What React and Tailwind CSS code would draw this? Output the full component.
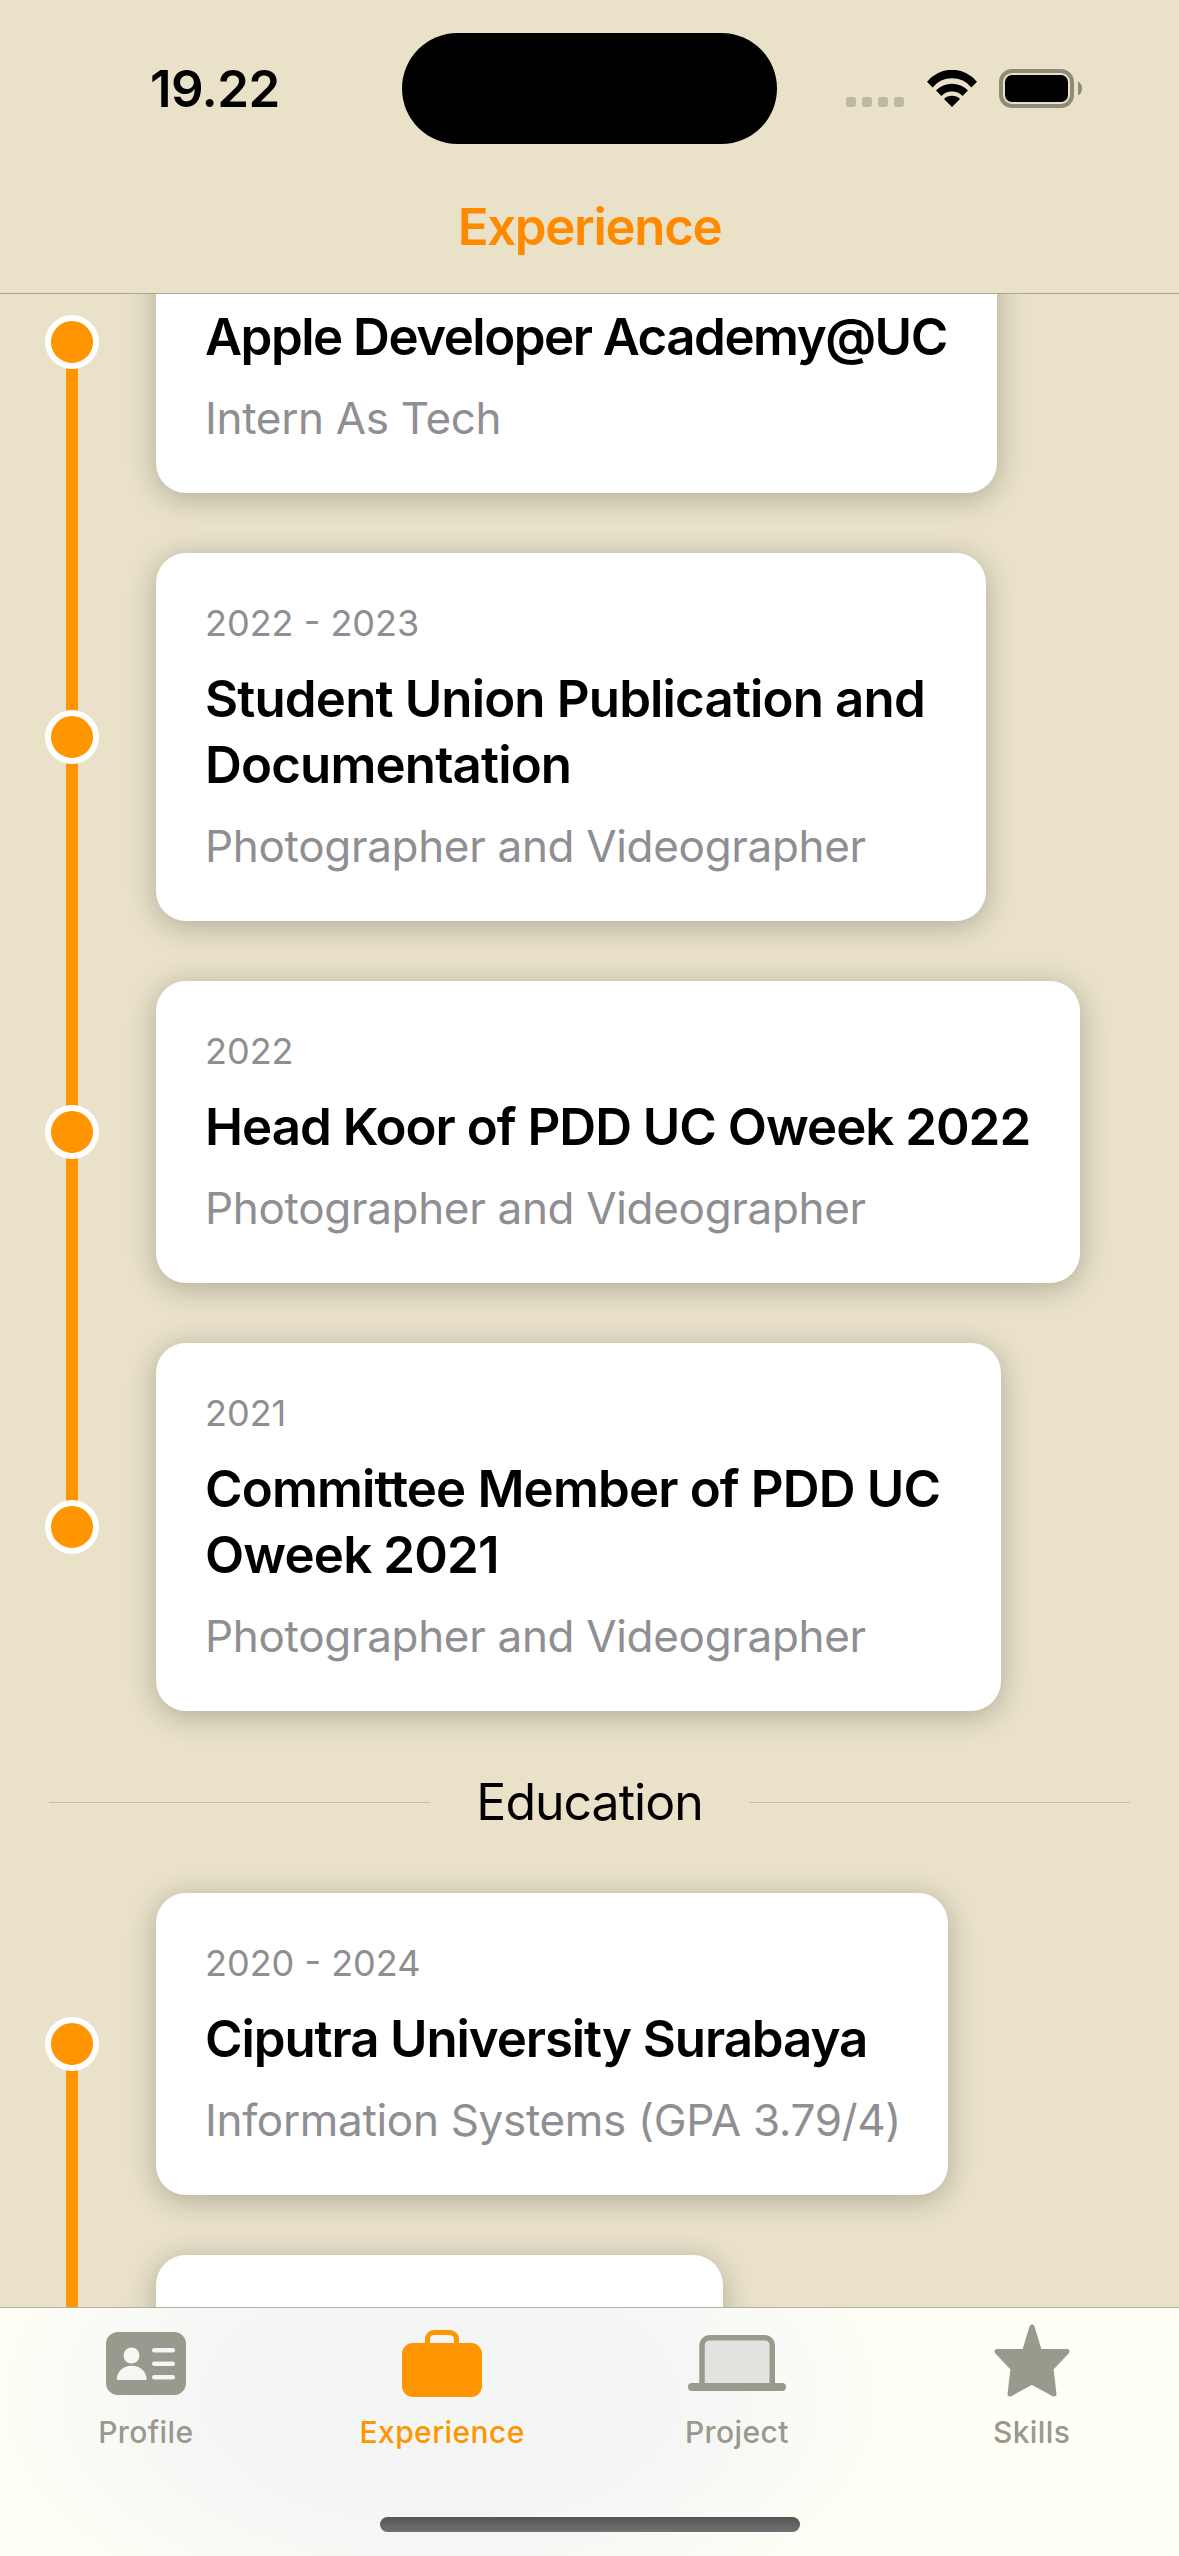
const font = { fontFamily: 'Inter, "Liberation Sans", sans-serif' };

function Wifi() {
  return (
    <svg width="50" height="37" viewBox="0 0 50 37" fill="#000">
      <path d="M0 11.8A32 32 0 0 1 50 11.8L44.4 17.4A25 25 0 0 0 5.6 17.4Z" />
      <path d="M9 20.6A22 22 0 0 1 41 20.6L35.6 26A15 15 0 0 0 14.4 26Z" />
      <path d="M17 29A11.5 11.5 0 0 1 33 29L25 37Z" />
    </svg>
  );
}

function Battery() {
  return (
    <svg width="84" height="39" viewBox="0 0 84 39">
      <rect x="2" y="2" width="71" height="35" rx="11" fill="none" stroke="#8f8b78" strokeWidth="4" />
      <rect x="6" y="6" width="63" height="27" rx="7" fill="#000" />
      <path d="M79 12.5C82 14 83 16.5 83 19.5C83 22.5 82 25 79 26.5Z" fill="#8f8b78" />
    </svg>
  );
}

function ProfileIcon() {
  return (
    <svg width="80" height="63" viewBox="0 0 80 63" className="mb-[2px]">
      <rect width="80" height="63" rx="12" fill="#99998d" />
      <circle cx="25.5" cy="23.5" r="8" fill="#f6f6f2" />
      <path d="M10.7 48C10.7 39.5 17 33.7 25.7 33.7C34.4 33.7 40.7 39.5 40.7 48Z" fill="#f6f6f2" />
      <rect x="46" y="16" width="23" height="4.5" rx="2.25" fill="#f6f6f2" />
      <rect x="46" y="29.5" width="23" height="4.5" rx="2.25" fill="#f6f6f2" />
      <rect x="46" y="43" width="23" height="4.5" rx="2.25" fill="#f6f6f2" />
    </svg>
  );
}

function BriefcaseIcon() {
  return (
    <svg width="80" height="67" viewBox="0 0 80 67">
      <path d="M25.5 16V9A6.5 6.5 0 0 1 32 2.5H48A6.5 6.5 0 0 1 54.5 9V16" fill="none" stroke="#ff9500" strokeWidth="5" />
      <rect y="13" width="80" height="54" rx="11" fill="#ff9500" />
    </svg>
  );
}

function LaptopIcon() {
  return (
    <svg width="98" height="56" viewBox="0 0 98 56" className="mb-[6px]">
      <path d="M14 50V10A7.5 7.5 0 0 1 21.5 2.75H77A7.5 7.5 0 0 1 84.25 10V50" fill="#e2e3de" stroke="#99998d" strokeWidth="5.5" />
      <rect y="48" width="98" height="8" rx="4" fill="#99998d" />
    </svg>
  );
}

function StarIcon() {
  return (
    <svg width="76" height="73" viewBox="0 0 76 73">
      <polygon
        points="38,3 45.5,27.5 73,27.5 57,44.5 60,70 37.8,58 16,70 19,44.5 3,27.5 30.5,27.5"
        fill="#99998d"
        stroke="#99998d"
        strokeWidth="5"
        strokeLinejoin="round"
      />
    </svg>
  );
}

function Row({ date, title, sub, widthClass, heightClass, trackingClass, lineUp, lineDown }) {
  return (
    <div className="flex items-center">
      <div className="relative flex w-[156px] shrink-0 items-center self-stretch">
        {lineUp && <div className="absolute left-[66px] top-0 bottom-1/2 w-[12px] bg-[#ff9500]" />}
        {lineDown && <div className="absolute left-[66px] top-1/2 -bottom-[60px] w-[12px] bg-[#ff9500]" />}
        <div className="relative ml-[45px] h-[54px] w-[54px] rounded-full border-[6px] border-white bg-[#ff9500]" />
      </div>
      <div className={`rounded-[30px] bg-white pl-[49px] pr-[20px] shadow-[0_5px_30px_rgba(0,0,0,0.25)] ${widthClass} ${heightClass || 'pt-[46px] pb-[45px]'}`}>
        {title && (
          <>
            <div className="h-[48px] text-[36px] leading-[48px] text-[#8e8e93]">{date}</div>
            <div className={`mt-[19px] text-[51px] font-semibold leading-[66px] text-black ${trackingClass || 'tracking-[-0.9px]'}`}>{title}</div>
            <div className="mt-[18px] text-[44px] leading-[60px] tracking-[-0.32px] text-[#8e8e93]">{sub}</div>
          </>
        )}
      </div>
    </div>
  );
}

function Tab({ label, active, shiftClass, children }) {
  return (
    <div className={`flex flex-col items-center ${shiftClass || ''}`}>
      <div className="flex h-[73px] items-end">{children}</div>
      <div className={`mt-[17px] text-[30px] font-medium leading-[36px] tracking-[0.4px] ${active ? 'text-[#ff9500]' : 'text-[#99998d]'}`}>
        {label}
      </div>
    </div>
  );
}

export default function App() {
  return (
    <div style={font} className="flex h-[2556px] w-[1179px] flex-col overflow-hidden bg-[#e9e2c9]">
      <header className="h-[294px] shrink-0 border-b border-[#aaa590]">
        <div className="grid grid-cols-[402px_375px_402px] items-center pt-[33px]">
          <div className="pl-[150px] text-[51px] font-semibold leading-[60px] tracking-[-0.6px] text-black">19.22</div>
          <div className="h-[111px] rounded-full bg-black" />
          <div className="flex h-[39px] items-end pl-[69px]">
            <div className="mb-[1px] flex gap-[6px]">
              <div className="h-[10px] w-[10px] rounded-[3px] bg-[#bdb8a1]" />
              <div className="h-[10px] w-[10px] rounded-[3px] bg-[#bdb8a1]" />
              <div className="h-[10px] w-[10px] rounded-[3px] bg-[#bdb8a1]" />
              <div className="h-[10px] w-[10px] rounded-[3px] bg-[#bdb8a1]" />
            </div>
            <div className="ml-[23px] mb-[1px] flex"><Wifi /></div>
            <div className="ml-[22px] flex"><Battery /></div>
          </div>
        </div>
        <h1 className="mt-[50px] text-center text-[51px] font-semibold leading-[66px] tracking-[-1.35px] text-[#ff8a00]">Experience</h1>
      </header>

      <main className="min-h-0 flex-1 overflow-hidden">
        <div className="-mt-[103px] flex flex-col">
          <div className="flex flex-col gap-[60px]">
            <Row title="Apple Developer Academy@UC" sub="Intern As Tech" widthClass="w-[841px]" trackingClass="tracking-[-1.5px]" lineDown />
            <Row date="2022 - 2023" title="Student Union Publication and Documentation" sub="Photographer and Videographer" widthClass="w-[830px]" trackingClass="tracking-[-0.85px]" lineUp lineDown />
            <Row date="2022" title="Head Koor of PDD UC Oweek 2022" sub="Photographer and Videographer" widthClass="w-[924px]" trackingClass="tracking-[-1px]" lineUp lineDown />
            <Row date="2021" title="Committee Member of PDD UC Oweek 2021" sub="Photographer and Videographer" widthClass="w-[845px]" trackingClass="tracking-[-0.85px]" lineUp />
          </div>

          <div className="my-[58px] flex items-center gap-[46px] px-[49px]">
            <div className="h-px flex-1 bg-[#c4bfa8]" />
            <div className="text-[50px] leading-[66px] tracking-[-1px] text-black">Education</div>
            <div className="h-px flex-1 bg-[#c4bfa8]" />
          </div>

          <div className="flex flex-col gap-[60px]">
            <Row date="2020 - 2024" title="Ciputra University Surabaya" sub="Information Systems (GPA 3.79/4)" widthClass="w-[792px]" trackingClass="tracking-[-1.1px]" lineDown />
            <Row widthClass="w-[567px]" heightClass="h-[302px]" lineUp />
          </div>
        </div>
      </main>

      <nav className="relative flex h-[249px] shrink-0 flex-col border-t border-[#aeaeaa] bg-[radial-gradient(ellipse_480px_260px_at_440px_90px,#f4f5f5_45%,#fffff6_100%)] pt-[16px]">
        <div className="grid grid-cols-4">
          <Tab label="Profile" shiftClass="mr-[3px]"><ProfileIcon /></Tab>
          <Tab label="Experience" active><BriefcaseIcon /></Tab>
          <Tab label="Project"><LaptopIcon /></Tab>
          <Tab label="Skills"><StarIcon /></Tab>
        </div>
        <div className="mx-auto mb-[24px] mt-auto h-[15px] w-[420px] rounded-full bg-[linear-gradient(#555555,#707070)]" />
      </nav>
    </div>
  );
}
